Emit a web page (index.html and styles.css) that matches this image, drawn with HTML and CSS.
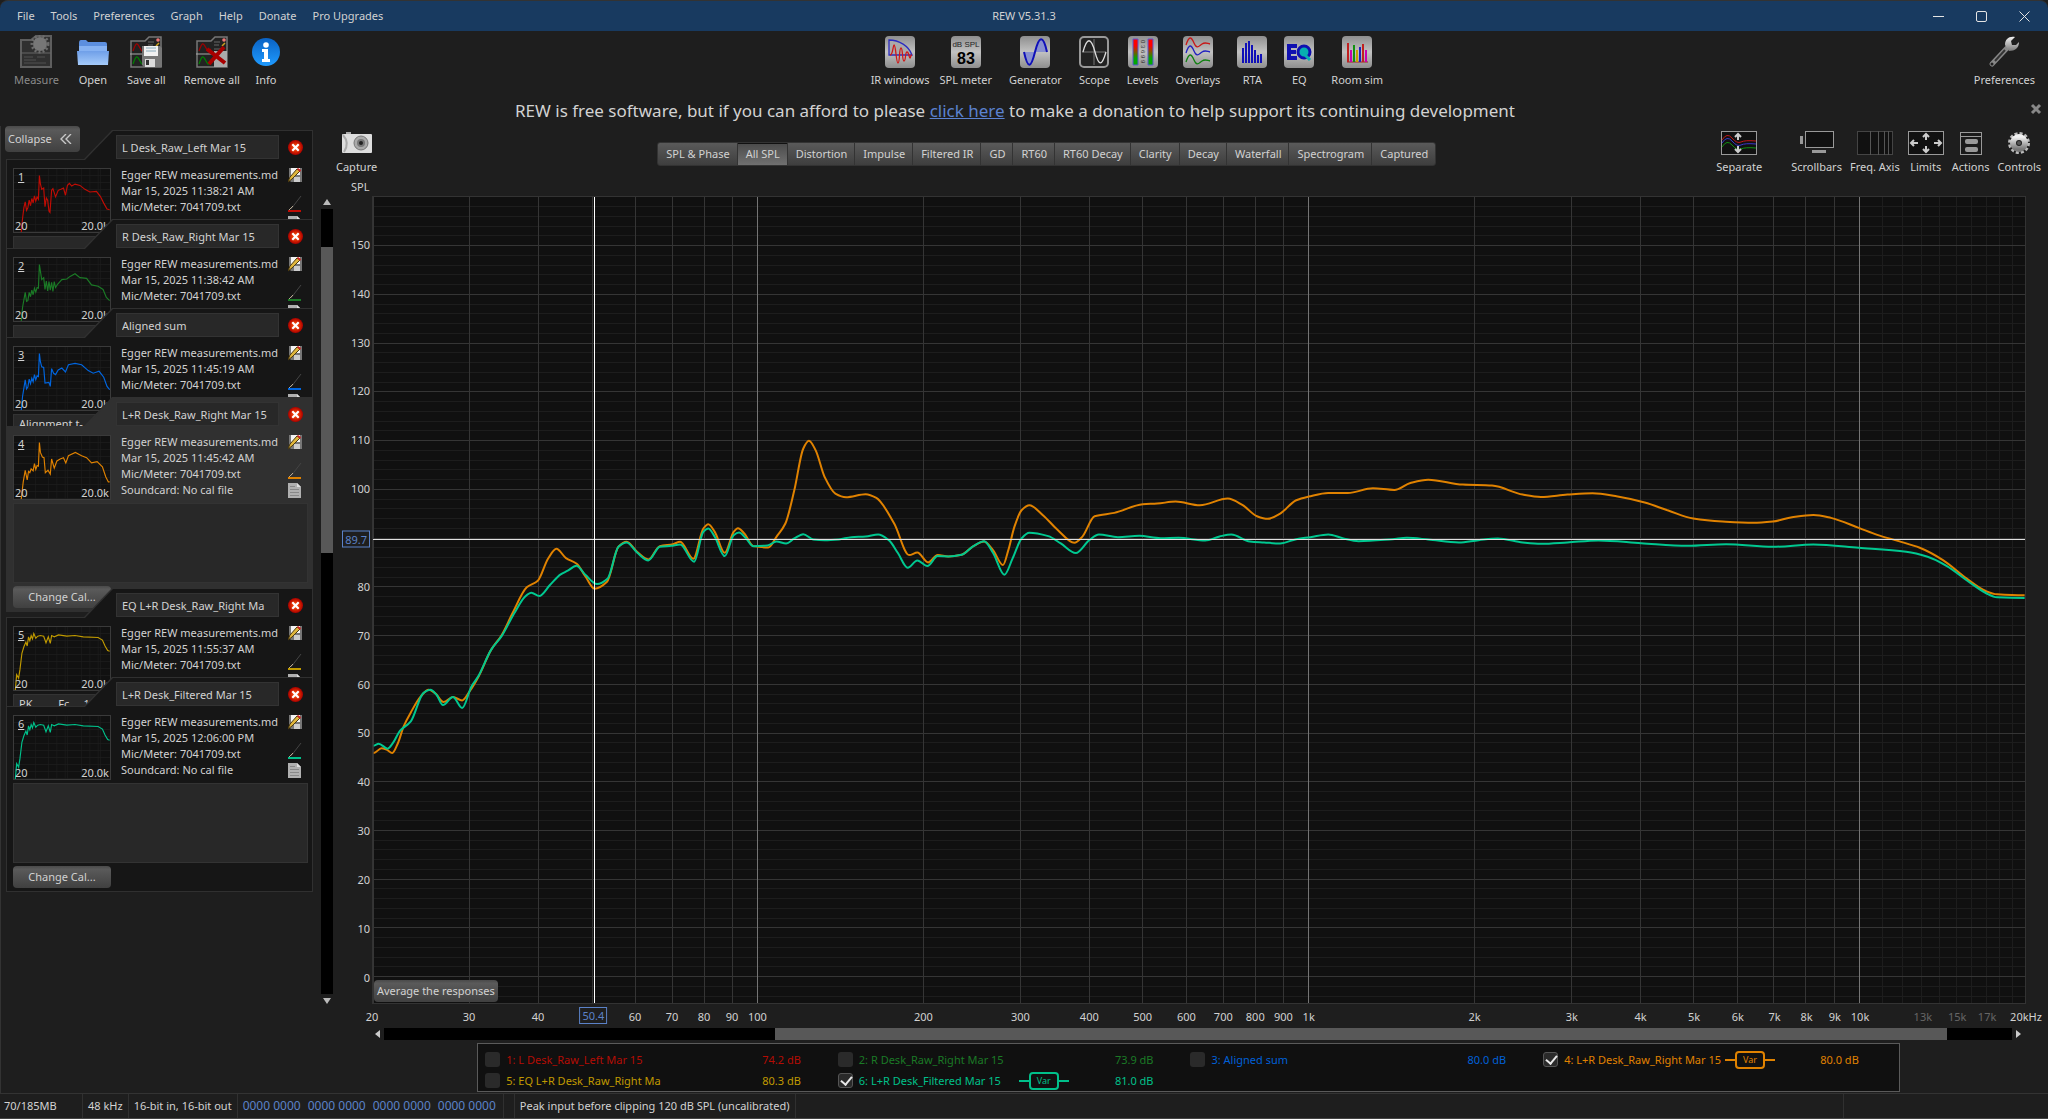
FILE: index.html
```html
<!DOCTYPE html>
<html lang="en">
<head>
    <meta charset="UTF-8">
    <meta name="viewport" content="width=device-width, initial-scale=1.0">
    <title>REW V5.31.3</title>
    <link rel="stylesheet" href="styles.css">
</head>
<body>
    <!-- Shared gradients and small icons -->
    <svg class="defs" aria-hidden="true">
        <defs>
            <linearGradient id="plate" x1="0" y1="0" x2="0" y2="1">
                <stop offset="0" stop-color="#8e8e8e"/><stop offset="0.5" stop-color="#c2c2c2"/><stop offset="1" stop-color="#8e8e8e"/>
            </linearGradient>
            <linearGradient id="level" x1="0" y1="0" x2="0" y2="1">
                <stop offset="0.25" stop-color="#f00"/><stop offset="0.75" stop-color="#00a800"/>
            </linearGradient>
            <linearGradient id="folder" x1="0" y1="0" x2="0" y2="1">
                <stop offset="0" stop-color="#6f9fe8"/><stop offset="1" stop-color="#a5cbfa"/>
            </linearGradient>
            <linearGradient id="blue" x1="0" y1="0" x2="0" y2="1">
                <stop offset="0" stop-color="#0a62c4"/><stop offset="1" stop-color="#1f9bff"/>
            </linearGradient>
            <linearGradient id="steel" x1="0" y1="0" x2="0" y2="1">
                <stop offset="0" stop-color="#f2f2f2"/><stop offset="1" stop-color="#777"/>
            </linearGradient>
            <radialGradient id="red">
                <stop offset="0" stop-color="#ff6a20"/><stop offset="0.6" stop-color="#d82400"/><stop offset="1" stop-color="#a80000"/>
            </radialGradient>
        </defs>
        <symbol id="i-delete" viewBox="0 0 14 14">
            <circle cx="7" cy="7" r="7" fill="url(#red)"/>
            <path d="M4 4l6 6M10 4l-6 6" stroke="#fff" stroke-width="2"/>
        </symbol>
        <symbol id="i-edit" viewBox="0 0 15 15">
            <path d="M1 0h13v14H3l-2-2z" fill="#777"/>
            <path d="M3 0h9v7H3z" fill="#f4f4f4"/>
            <path d="M6 9h6v5H6z" fill="#ccc"/>
            <path d="M0 14L2 9 9 1l3 2-8 8z" fill="#e0b63c" stroke="#4b3a10"/>
            <path d="M9 1l1-1 3 2-1 2z" fill="#d02020"/>
        </symbol>
        <symbol id="i-doc" viewBox="0 0 13 15">
            <path d="M0 0h9l4 4v11H0z" fill="#b0b0b0"/>
            <path d="M9 0v4h4" fill="#e0e0e0"/>
            <path d="M2 3.5h5M2 6.5h9M2 9.5h9M2 12.5h9" stroke="#888"/>
        </symbol>
        <symbol id="i-sheet" viewBox="0 0 32 32">
            <path d="M1 5h14l4-4h12v30H1z" fill="#222" stroke="#777" stroke-width="1.5"/>
            <path d="M0 18h31" stroke="#aaa"/>
            <path d="M3 15c3-9 4-9 7-3s3 2 5 1" fill="none" stroke="#a00000" stroke-width="1.2"/>
            <path d="M3 28c3-9 4-9 7-3s3 2 5 1" fill="none" stroke="#008000" stroke-width="1.2"/>
            <circle cx="28" cy="4" r="1.8" fill="#e77"/>
            <path d="M26 10l3-3M26 23l3-3" stroke="#c9a020" stroke-width="1.5"/>
            <path d="M18 6h6M18 9h5M18 13h7" stroke="#666"/>
        </symbol>
    </svg>

    <!-- Title bar -->
    <header class="titlebar">
        <nav class="menu">
            <button>File</button><button>Tools</button><button>Preferences</button><button>Graph</button><button>Help</button><button>Donate</button><button>Pro Upgrades</button>
        </nav>
        <h1>REW V5.31.3</h1>
        <div class="window-buttons">
            <button aria-label="Minimize"><svg width="11" height="11" viewBox="0 0 11 11"><path d="M0 5.5h11"/></svg></button>
            <button aria-label="Maximize"><svg width="11" height="11" viewBox="0 0 11 11"><rect x=".5" y=".5" width="10" height="10" rx="1.5"/></svg></button>
            <button aria-label="Close"><svg width="11" height="11" viewBox="0 0 11 11"><path d="M.5.5l10 10M10.5.5l-10 10"/></svg></button>
        </div>
    </header>

    <!-- Main toolbar -->
    <div class="toolbar">
        <div class="tools left">
            <button class="tool" disabled>
                <svg width="32" height="34" viewBox="0 0 32 34"><path d="M1 5h10l5-4h15v31H1z" fill="#303030" stroke="#5e5e5e" stroke-width="2"/><path d="M1 18h30" stroke="#666"/><circle cx="20" cy="9" r="7" fill="#777"/><circle cx="20" cy="9" r="8" fill="none" stroke="#6c6c6c" stroke-width="3" stroke-dasharray="2 2"/><path d="M4 22h9M4 25h12M4 28h22M17 22h8" stroke="#505050"/></svg>
                <span>Measure</span>
            </button>
            <button class="tool">
                <svg width="32" height="34" viewBox="0 0 32 34"><path d="M2 8q0-3 2-3h5l2 2h17q2 0 2 2v10H2z" fill="#5c8fdf"/><path d="M2 11h28v5H2z" fill="#86b2f2"/><path d="M0 16h32l-1 14H1z" fill="url(#folder)"/></svg>
                <span>Open</span>
            </button>
            <button class="tool">
                <svg width="32" height="34" viewBox="0 0 32 34"><use href="#i-sheet" width="32" height="32" y="1"/><path d="M12 11h18l2 2v19H14l-2-2z" fill="#777"/><path d="M14 11h14v10H14z" fill="#f1f1f1"/><path d="M16 13h10M16 16h10" stroke="#8ab"/><path d="M15 24h10v8H15z" fill="#ddd"/><path d="M16 25h3v5h-3z" fill="#333"/></svg>
                <span>Save all</span>
            </button>
            <button class="tool">
                <svg width="32" height="34" viewBox="0 0 32 34"><use href="#i-sheet" width="32" height="32" y="1"/><path d="M18 16h13v16H18z" fill="#aaa"/><path d="M11 14l18 14M28 12L13 29" stroke="#a80000" stroke-width="4"/></svg>
                <span>Remove all</span>
            </button>
            <button class="tool info">
                <svg width="28" height="34" viewBox="0 0 28 34"><circle cx="14" cy="17" r="14" fill="url(#blue)"/><circle cx="14" cy="10" r="2.8" fill="#fff"/><path d="M10 14h6v10h2v3h-8v-3h2v-7h-2z" fill="#fff"/></svg>
                <span>Info</span>
            </button>
        </div>
        <div class="tools middle">
            <button class="tool">
                <svg width="30" height="34" viewBox="0 0 30 34"><rect y="1" width="30" height="32" rx="4" fill="url(#plate)"/><path d="M4 20V5c10 0 20 6 23 15z" fill="#aaa" stroke="#2c2cc0" stroke-width="1.3"/><path d="M5 20c3 0 3-10 4-10 2 0 2 18 4 18s1-15 3-15 1 13 3 13 1-9 3-9 2 6 3 6 0-3 2-3" fill="none" stroke="#d01818" stroke-width="1.3"/></svg>
                <span>IR windows</span>
            </button>
            <button class="tool">
                <svg width="30" height="34" viewBox="0 0 30 34"><rect y="1" width="30" height="32" rx="4" fill="url(#plate)"/><text x="15" y="12" class="icon-text" font-size="8">dB SPL</text><text x="15" y="29" class="icon-text bold" font-size="16">83</text></svg>
                <span>SPL meter</span>
            </button>
            <button class="tool wide">
                <svg width="30" height="34" viewBox="0 0 30 34"><rect y="1" width="30" height="32" rx="4" fill="url(#plate)"/><path d="M4 17C8 35 11 33 15 17z M15 17C19-1 23-1 27 17z" fill="#8890d0"/><path d="M4 17C8 35 11 33 15 17S23-1 27 17" fill="none" stroke="#1010b8" stroke-width="2"/></svg>
                <span>Generator</span>
            </button>
            <button class="tool wide">
                <svg width="30" height="34" viewBox="0 0 30 34"><rect x="1" y="2" width="28" height="30" rx="4" fill="#222" stroke="#999" stroke-width="2"/><path d="M15 4v26M3 17h24" stroke="#777"/><path d="M4 17c4-15 8-15 12 0s7 14 11 0" fill="none" stroke="#ddd" stroke-width="1.3"/></svg>
                <span>Scope</span>
            </button>
            <button class="tool wide">
                <svg width="30" height="34" viewBox="0 0 30 34"><rect y="1" width="30" height="32" rx="4" fill="url(#plate)"/><path d="M5 4h5v26H5zM20 4h5v26h-5z" fill="url(#level)" stroke="#5858d0"/><text transform="rotate(90 13 5)" x="13" y="5" font-size="6" font-family="Liberation Sans" fill="#333">0 3 6 9 9</text></svg>
                <span>Levels</span>
            </button>
            <button class="tool wide">
                <svg width="30" height="34" viewBox="0 0 30 34"><rect y="1" width="30" height="32" rx="4" fill="url(#plate)"/><path d="M3 10c3-9 5-9 8-2s5 3 8 1 4-1 8 0" fill="none" stroke="#c81818" stroke-width="1.3"/><path d="M3 18c3-9 5-9 8-2s5 3 8 1 4-1 8 0" fill="none" stroke="#2020c0" stroke-width="1.3"/><path d="M3 27c3-9 5-9 8-2s5 3 8 1 4-1 8 0" fill="none" stroke="#108010" stroke-width="1.3"/></svg>
                <span>Overlays</span>
            </button>
            <button class="tool wide">
                <svg width="30" height="34" viewBox="0 0 30 34"><rect y="1" width="30" height="32" rx="4" fill="url(#plate)"/><path d="M6 28V13M9 28V8M12 28V6M15 28V10M18 28V15M21 28V20M24 28V19" stroke="#1010b8" stroke-width="2"/></svg>
                <span>RTA</span>
            </button>
            <button class="tool wide">
                <svg width="30" height="34" viewBox="0 0 30 34"><rect y="1" width="30" height="32" rx="4" fill="url(#plate)"/><path d="M3 9h10v4H7v2h5v4H7v2h6v4H3z" fill="#1010b0"/><circle cx="20" cy="17" r="6" fill="#08b0b0" stroke="#1010b0" stroke-width="3"/><path d="M21 20l5 5" stroke="#08b0b0" stroke-width="3"/></svg>
                <span>EQ</span>
            </button>
            <button class="tool wide">
                <svg width="30" height="34" viewBox="0 0 30 34"><rect y="1" width="30" height="32" rx="4" fill="url(#plate)"/><path d="M5 27h21" stroke="#a02020"/><path d="M6 27V8" stroke="#c02020" stroke-width="2"/><path d="M9 27V15M24 27V15" stroke="#c800b0" stroke-width="2"/><path d="M12 27V10" stroke="#109010" stroke-width="2"/><path d="M15 27V15" stroke="#c8a000" stroke-width="2"/><path d="M18 27V12" stroke="#2020c0" stroke-width="2"/><path d="M21 27V9" stroke="#c02020" stroke-width="2"/></svg>
                <span>Room sim</span>
            </button>
        </div>
        <div class="tools right">
            <button class="tool">
                <svg width="32" height="34" viewBox="0 0 32 34"><path d="M4 29L20 12" stroke="#888" stroke-width="5" stroke-linecap="round"/><path d="M7 26L17 15" stroke="#333" stroke-width="2"/><circle cx="4" cy="29" r="1.5" fill="#222"/><path d="M17 10C17 4 21 1 27 2l-4 4 1 4 4 0 3-3c0 6-4 9-10 9z" fill="url(#steel)"/></svg>
                <span>Preferences</span>
            </button>
        </div>
    </div>

    <!-- Donation message -->
    <div class="donate">
        <p>REW is free software, but if you can afford to please <a href="#">click here</a> to make a donation to help support its continuing development</p>
        <button aria-label="Dismiss"><svg width="12" height="12" viewBox="0 0 12 12"><path d="M2 2l8 8M10 2l-8 8" stroke="#888" stroke-width="3"/></svg></button>
    </div>

    <div class="workspace">
        <!-- Measurements -->
        <aside class="sidebar">
            <button class="collapse raised">Collapse <svg width="12" height="10" viewBox="0 0 12 10"><path d="M6 0L1 5l5 5M11 0L6 5l5 5" fill="none" stroke="#c8c8c8" stroke-width="1.4"/></svg></button>
            <div class="cards" id="cards"></div>
            <div class="vscroll">
                <svg width="8" height="6" viewBox="0 0 8 6"><path d="M4 0l4 6H0z" fill="#bbb"/></svg>
                <div class="track"><div class="thumb"></div></div>
                <svg width="8" height="6" viewBox="0 0 8 6"><path d="M4 6l4-6H0z" fill="#bbb"/></svg>
            </div>
        </aside>

        <main class="graph">
            <div class="graph-bar">
                <button class="tool">
                    <svg width="30" height="24" viewBox="0 0 30 24"><path d="M4 1h5v3H4z" fill="#aaa"/><rect y="3" width="30" height="19" rx="1" fill="#dedede"/><path d="M1 4q7 8 1 17" fill="none" stroke="#aaa" stroke-width="2"/><circle cx="19" cy="12" r="7" fill="#aaa" stroke="#777"/><circle cx="19" cy="12" r="4" fill="#777"/><circle cx="19" cy="12" r="2" fill="#222"/></svg>
                    <span>Capture</span>
                </button>
                <div class="tabs">
                    <button>SPL &amp; Phase</button><button class="selected">All SPL</button><button>Distortion</button><button>Impulse</button><button>Filtered IR</button><button>GD</button><button>RT60</button><button>RT60 Decay</button><button>Clarity</button><button>Decay</button><button>Waterfall</button><button>Spectrogram</button><button>Captured</button>
                </div>
                <div class="graph-tools">
                    <button class="tool separate">
                        <svg width="36" height="24" viewBox="0 0 36 24"><rect x=".5" y=".5" width="35" height="23" fill="#111" stroke="#999"/><path d="M1 9q5-8 10-2t9 4 15-1" fill="none" stroke="#c01818"/><path d="M1 12q5-8 10-2t9 4 15-1" fill="none" stroke="#3838c8"/><path d="M1 16q5-8 10-2t9 4 15-1" fill="none" stroke="#109010"/><path d="M17 9V3M14 6l3-3 3 3M17 15v6M14 18l3 3 3-3" fill="none" stroke="#ccc" stroke-width="2"/></svg>
                        <span>Separate</span>
                    </button>
                    <button class="tool">
                        <svg width="36" height="24" viewBox="0 0 36 24"><rect x="6.5" y=".5" width="28" height="16" fill="#111" stroke="#999"/><path d="M1 5h3v8H1zM13 19h14v3H13z" fill="#999"/></svg>
                        <span>Scrollbars</span>
                    </button>
                    <button class="tool">
                        <svg width="36" height="24" viewBox="0 0 36 24"><rect x=".5" y=".5" width="35" height="23" fill="#111" stroke="#444"/><path d="M13.5 0v24M21.5 0v24M27.5 0v24M31.5 0v24" stroke="#555"/></svg>
                        <span>Freq. Axis</span>
                    </button>
                    <button class="tool">
                        <svg width="36" height="24" viewBox="0 0 36 24"><rect x=".5" y=".5" width="35" height="23" fill="#111" stroke="#999"/><path d="M18 9V3M15 6l3-3 3 3M18 15v6M15 18l3 3 3-3M10 12H3M6 9l-3 3 3 3M26 12h7M30 9l3 3-3 3" fill="none" stroke="#ccc" stroke-width="2"/></svg>
                        <span>Limits</span>
                    </button>
                    <button class="tool">
                        <svg width="24" height="24" viewBox="0 0 24 24"><rect x="1.5" y="1.5" width="21" height="22" fill="#1a1a1a" stroke="#999"/><path d="M1 5.5h22" stroke="#999"/><rect x="6" y="8" width="13" height="5" rx="2" fill="#999"/><rect x="6" y="16" width="13" height="5" rx="2" fill="#999"/></svg>
                        <span>Actions</span>
                    </button>
                    <button class="tool">
                        <svg width="24" height="24" viewBox="0 0 24 24"><circle cx="12" cy="12" r="9.5" fill="none" stroke="#bbb" stroke-width="3" stroke-dasharray="3 2"/><circle cx="12" cy="12" r="6" fill="none" stroke="url(#steel)" stroke-width="6"/><circle cx="12" cy="12" r="2" fill="#555"/></svg>
                        <span>Controls</span>
                    </button>
                </div>
            </div>

            <div class="axis-title">SPL</div>
            <div class="plot-row">
                <div class="y-axis" id="yAxis"></div>
                <div class="plot">
                    <svg id="plot" viewBox="0 0 4631 2424" preserveAspectRatio="none"></svg>
                    <button class="average raised">Average the responses</button>
                </div>
            </div>
            <div class="x-axis" id="xAxis"></div>
            <div class="hscroll">
                <svg width="5" height="8" viewBox="0 0 5 8"><path d="M0 4l5-4v8z" fill="#ccc"/></svg>
                <div class="track"><div class="thumb"></div></div>
                <svg width="5" height="8" viewBox="0 0 5 8"><path d="M5 4L0 0v8z" fill="#ccc"/></svg>
            </div>

            <!-- Legend -->
            <div class="legend">
                <label class="c1"><input type="checkbox"><span>1: L Desk_Raw_Left Mar 15</span><output>74.2 dB</output></label>
                <label class="c2"><input type="checkbox"><span>2: R Desk_Raw_Right Mar 15</span><output>73.9 dB</output></label>
                <label class="c3"><input type="checkbox"><span>3: Aligned sum</span><output>80.0 dB</output></label>
                <label class="c4"><input type="checkbox" checked><span>4: L+R Desk_Raw_Right Mar 15</span><i><b>Var</b></i><output>80.0 dB</output></label>
                <label class="c5"><input type="checkbox"><span>5: EQ L+R Desk_Raw_Right Ma</span><output>80.3 dB</output></label>
                <label class="c6"><input type="checkbox" checked><span>6: L+R Desk_Filtered Mar 15</span><i><b>Var</b></i><output>81.0 dB</output></label>
            </div>
        </main>
    </div>

    <footer class="status">
        <span class="memory">70/185MB</span>
        <span>48 kHz</span>
        <span>16-bit in, 16-bit out</span>
        <span class="bits"><b>0000 0000</b><b>0000 0000</b><b>0000 0000</b><b>0000 0000</b></span>
        <span class="spacer"></span>
        <span>Peak input before clipping 120 dB SPL (uncalibrated)</span>
        <span class="rest"></span>
    </footer>

    <script src="script.js"></script>
</body>
</html>
```
FILE: styles.css
```css
* {
    box-sizing: border-box;
}
body {
    margin: 0;
    height: 100vh;
    display: flex;
    flex-direction: column;
    overflow: hidden;
    background-color: #1e1e1e;
    color: #d2d2d2;
    font-family: "Noto Sans", sans-serif;
    font-size: 11px;
    line-height: 16px;
}
button, input, textarea {
    font: inherit;
    color: inherit;
    background: none;
    border: none;
    padding: 0;
    margin: 0;
}
button {
    white-space: nowrap;
}
.defs {
    position: absolute;
    width: 0;
    height: 0;
}
.raised {
    background: linear-gradient(#4a4a4a, #5a5a5a 15%, #404040);
    border-radius: 4px;
}

/* Title bar */
.titlebar {
    flex: none;
    display: grid;
    grid-template-columns: 1fr auto 1fr;
    align-items: center;
    height: 31px;
    border-top: 1px solid #333;
    border-radius: 8px 8px 0 0;
    background-color: #183a60;
}
.titlebar h1 {
    margin: 0;
    font-size: 11px;
    font-weight: normal;
}
.menu {
    display: flex;
    gap: 16px;
    padding-left: 17px;
}
.window-buttons {
    display: flex;
    justify-content: flex-end;
    gap: 32px;
    padding-right: 18px;
}
.window-buttons svg {
    display: block;
    fill: none;
    stroke: #e4e4e4;
}

/* Toolbars */
.toolbar {
    flex: none;
    display: flex;
    justify-content: space-between;
    padding: 4px 13px 7px 14px;
}
.tools {
    display: flex;
    gap: 18px;
}
.tools.middle {
    gap: 10px;
}
.tool {
    display: flex;
    flex-direction: column;
    align-items: center;
    gap: 3px;
}
.tool.wide {
    margin-left: 7px;
}
.tool.info {
    margin-left: -6px;
}
.tool:disabled {
    color: #8a8a8a;
}
.icon-text {
    font-family: "Liberation Sans", sans-serif;
    text-anchor: middle;
    fill: #222;
}
.icon-text.bold {
    font-weight: bold;
    fill: #000;
}
.donate {
    flex: none;
    display: flex;
    align-items: center;
    height: 31px;
    padding-right: 6px;
}
.donate p {
    flex: 1;
    margin: 0;
    text-align: center;
    font-size: 17px;
    line-height: 24px;
}
.donate a {
    color: #5b82d0;
}
.workspace {
    flex: 1;
    display: flex;
    min-height: 0;
}

/* Measurement list */
.sidebar {
    position: relative;
    flex: none;
    display: flex;
    gap: 7px;
    width: 334px;
    padding: 4px 1px 89px 5px;
    border-left: 1px solid #333;
}
.collapse {
    position: absolute;
    top: 0;
    left: 4px;
    z-index: 1;
    display: flex;
    align-items: center;
    gap: 8px;
    height: 26px;
    padding: 0 8px 0 3px;
}
.cards {
    flex: 1;
}
.card {
    position: relative;
    padding: 5px 5px 4px 7px;
    background-color: #303030;
    clip-path: polygon(0 29px, 78px 29px, 106px 0, 100% 0, 100% 100%, 0 100%);
}
.card::before {
    content: "";
    position: absolute;
    inset: 1px;
    background-color: #161616;
    clip-path: polygon(0 29px, 78px 29px, 106px 0, 100% 0, 100% 100%, 0 100%);
}
.card.selected::before {
    background-color: #303030;
}
.card > * {
    position: relative;
}
.card.covered {
    margin-bottom: -126px;
}
.card.covered.selected {
    margin-bottom: -24px;
}
.card-head {
    display: flex;
    align-items: center;
    justify-content: space-between;
    padding: 0 5px 0 103px;
}
.card-head input {
    width: 163px;
    height: 24px;
    padding: 0 5px;
    border: 1px solid #333;
    background-color: #282828;
}
.card-head svg, .card-icons svg {
    display: block;
}
.card-body {
    display: grid;
    grid-template-columns: 98px 1fr 16px;
    gap: 10px;
    padding: 8px 4px 0 0;
}
.thumb-plot {
    position: relative;
    width: 98px;
    height: 65px;
    margin-top: 1px;
    border: 1px solid #3a3a3a;
    background: repeating-linear-gradient(#111 0 6px, #1a1a1a 6px 7px);
}
.thumb-plot svg {
    display: block;
    width: 96px;
    height: 63px;
}
.thumb-plot b, .thumb-plot span {
    position: absolute;
    bottom: -1px;
    line-height: 14px;
}
.thumb-plot b {
    top: 1px;
    bottom: auto;
    left: 4px;
    font-weight: normal;
    text-decoration: underline;
}
.thumb-plot .low {
    left: 1px;
}
.thumb-plot .high {
    right: 1px;
}
.card-info {
    margin: 0;
    white-space: nowrap;
    overflow: hidden;
}
.card-icons {
    display: grid;
    grid-auto-rows: 16px;
    align-items: center;
}
.card-icons .stroke {
    align-self: end;
    grid-row: 2 / 4;
}
.card-icons .doc {
    grid-row: 4;
}
.card textarea {
    display: block;
    width: 100%;
    height: 80px;
    margin: 3px 0;
    padding: 1px 5px;
    resize: none;
    border: 1px solid #333;
    background-color: #282828;
    white-space: pre;
    overflow: hidden;
}
.change {
    display: block;
    width: 98px;
    height: 22px;
}

/* Scrollbars */
.vscroll {
    display: flex;
    flex-direction: column;
    align-items: center;
    gap: 4px;
    width: 13px;
    padding-top: 69px;
}
.track {
    flex: 1;
    background-color: #000;
}
.vscroll .track {
    width: 12px;
    padding-top: 38px;
}
.thumb {
    background-color: #585858;
}
.vscroll .thumb {
    height: 41%;
}
.hscroll {
    display: flex;
    align-items: center;
    gap: 4px;
    margin: 2px 27px 0 41px;
}
.hscroll .track {
    height: 12px;
}
.hscroll .thumb {
    width: 72%;
    height: 12px;
    margin-left: 24%;
}

/* Graph */
.graph {
    flex: 1;
    min-width: 0;
    display: flex;
    flex-direction: column;
}
.graph-bar {
    display: flex;
    justify-content: space-between;
    align-items: flex-start;
    padding: 5px 7px 0 2px;
}
.graph-bar .tool {
    gap: 4px;
}
.graph-tools {
    display: flex;
    gap: 8px;
}
.separate {
    margin-right: 21px;
}
.tabs {
    display: flex;
    margin-top: 11px;
    border: 1px solid #333;
    border-radius: 3px;
    background: linear-gradient(#5a5a5a, #3e3e3e);
}
.tabs button {
    height: 22px;
    padding: 0 7px 0 8px;
    border-right: 1px solid #333;
}
.tabs button:last-child {
    border: none;
}
.tabs .selected {
    background: linear-gradient(#4a4a4a, #707070);
    box-shadow: inset 0 1px #111;
}
.axis-title {
    margin: 3px 0 0 17px;
    line-height: 18px;
}
.plot-row {
    flex: 1;
    min-height: 0;
    display: grid;
    grid-template-columns: 38px 1fr;
    padding-right: 22px;
}
.plot {
    position: relative;
    border: 1px solid #333;
    background-color: #101010;
}
.plot svg {
    position: absolute;
    width: 100%;
    height: 100%;
}
.plot path {
    fill: none;
    vector-effect: non-scaling-stroke;
    shape-rendering: crispEdges;
}
.minor { stroke: #1d1d1d; }
.major { stroke: #353535; }
.decade { stroke: #747474; }
.cursor { stroke: #fff; }
.level { stroke: #e0e0e0; }
.plot .trace {
    stroke-width: 2px;
    shape-rendering: auto;
}
.average {
    position: absolute;
    left: 1px;
    bottom: 1px;
    height: 22px;
    padding: 0 3px;
}
.y-axis, .x-axis {
    position: relative;
}
.x-axis {
    height: 22px;
    margin: 0 22px 0 38px;
}
.y-axis span {
    position: absolute;
    right: 2px;
    transform: translateY(-50%);
}
.x-axis span {
    position: absolute;
    top: 5px;
    transform: translateX(-50%);
}
.axis-mark {
    padding: 0 2px;
    line-height: 15px;
    border: 1px solid #5b82c8;
    background-color: #1e1e1e;
    color: #5b82c8;
}
.x-axis .axis-mark {
    top: 3px;
}
.dim {
    color: #666;
}

/* Legend */
.legend {
    display: grid;
    grid-template-columns: repeat(4, 1fr);
    width: 83%;
    align-self: center;
    margin: 3px 5px 1px 0;
    padding: 5px 3px 0 7px;
    border: 1px solid #5a5a5a;
    background-color: #101010;
}
.legend label {
    display: flex;
    align-items: center;
    height: 21px;
    padding-right: 37px;
    white-space: nowrap;
}
.legend input {
    appearance: none;
    width: 15px;
    height: 15px;
    margin-right: 6px;
    border-radius: 3px;
    background-color: #2a2a2a;
}
.legend input:checked {
    border: 1px solid #555;
}
.legend input:checked::after {
    content: "";
    display: block;
    width: 5px;
    height: 9px;
    margin-left: 4px;
    border: solid #e8e8e8;
    border-width: 0 2px 2px 0;
    rotate: 40deg;
}
.legend output {
    margin-left: auto;
}
.legend i {
    width: 50px;
    margin-left: 4px;
    padding: 0 10px;
    font-style: normal;
    background: linear-gradient(currentColor, currentColor) center / 100% 2px no-repeat;
}
.legend b {
    display: block;
    border: 2px solid currentColor;
    border-radius: 4px;
    background-color: #101010;
    text-align: center;
    font-size: 9px;
    font-weight: normal;
    line-height: 14px;
}
.legend .c6 i {
    margin-left: 18px;
}
.c1 { color: #b40c04; }
.c2 { color: #1b7a26; }
.c3 { color: #0060d8; }
.c4 { color: #e08200; }
.c5 { color: #c09a00; }
.c6 { color: #00c08a; }

/* Status bar */
.status {
    flex: none;
    display: flex;
    height: 26px;
    border-top: 1px solid #333;
    border-bottom: 1px solid #444;
    white-space: nowrap;
}
.status span {
    padding: 4px 5px 0;
    border-right: 1px solid #303030;
}
.status .memory {
    width: 83px;
    padding-left: 4px;
}
.status .bits {
    display: flex;
    gap: 7px;
    padding-right: 7px;
    color: #5b82c8;
    font-size: 12px;
}
.bits b {
    font-weight: normal;
}
.status .rest {
    width: 1048px;
}
```
FILE: script.js
```js
const cards = [
    { name: 'L Desk_Raw_Left Mar 15', time: 'Mar 15, 2025 11:38:21 AM', color: '#c00c04', notes: '',
      line: '22,192 26,150 30,118 34,100 38,126 42,118 46,95 50,112 54,90 58,103 62,82 66,98 70,85 74,92 77,20 80,45 84,62 90,58 94,115 98,88 102,95 106,128 109,132 114,65 118,60 126,85 134,65 142,62 150,58 156,80 162,50 168,44 175,52 185,46 200,50 215,62 230,70 250,68 262,84 272,104 282,122 290,124' },
    { name: 'R Desk_Raw_Right Mar 15', time: 'Mar 15, 2025 11:38:42 AM', color: '#1b7a26', notes: '',
      line: '22,192 26,150 34,105 38,132 42,130 46,105 50,118 54,98 58,112 62,92 66,104 70,90 74,92 77,20 80,40 84,66 90,60 94,96 98,70 102,100 106,72 110,98 114,74 118,102 122,72 126,90 132,80 145,66 160,64 170,56 185,48 200,60 220,62 235,82 255,86 270,96 280,120 290,130' },
    { name: 'Aligned sum', time: 'Mar 15, 2025 11:45:19 AM', color: '#0066e0', notes: 'Alignment t-',
      line: '22,192 26,150 34,100 38,128 42,122 46,98 50,112 54,95 58,106 62,84 66,100 70,88 74,90 77,20 80,45 84,60 90,62 94,110 106,108 110,120 114,66 120,80 126,84 134,70 145,64 156,76 165,54 185,50 205,54 225,72 240,80 258,74 272,92 282,120 290,130' },
    { name: 'L+R Desk_Raw_Right Mar 15', time: 'Mar 15, 2025 11:45:42 AM', color: '#e08200', notes: '', selected: true,
      line: '22,192 28,140 34,105 40,134 44,108 48,112 52,100 58,106 62,84 66,102 70,90 74,92 77,20 80,50 86,64 91,66 95,112 103,104 110,116 114,70 122,98 130,76 140,70 150,66 157,82 165,60 186,50 205,60 220,66 235,82 252,78 268,94 278,124 286,140 290,140' },
    { name: 'EQ L+R Desk_Raw_Right Ma', time: 'Mar 15, 2025 11:55:37 AM', color: '#c09a00', notes: 'PK         Fc     10',
      line: '4,192 8,145 14,156 18,130 24,80 30,60 36,46 40,58 44,30 48,42 52,26 56,36 60,20 66,34 72,28 80,26 90,28 97,48 104,30 110,50 114,26 122,30 135,24 160,28 185,26 210,30 255,32 268,40 276,58 284,72 290,74' },
    { name: 'L+R Desk_Filtered Mar 15', time: 'Mar 15, 2025 12:06:00 PM', color: '#00c08a', notes: '',
      line: '4,192 8,145 14,156 18,130 24,80 30,60 36,46 40,58 44,30 48,42 52,26 56,36 60,20 66,34 72,28 80,26 90,28 97,48 104,30 110,50 114,26 122,30 135,24 160,28 185,26 210,30 255,32 268,40 276,58 284,72 290,74' }
];

document.getElementById('cards').innerHTML = cards.map((c, i) => {
    const covered = i < cards.length - 1 ? 'covered' : '';
    return `
    <section class="card ${covered} ${c.selected ? 'selected' : ''}">
        <div class="card-head">
            <input type="text" aria-label="Measurement name" value="${c.name}">
            <button aria-label="Delete"><svg width="15" height="15"><use href="#i-delete"/></svg></button>
        </div>
        <div class="card-body">
            <div class="thumb-plot">
                <svg viewBox="0 0 291 192" preserveAspectRatio="none">
                    <path d="M65 0v192M105 0v192M130 0v192M155 0v192M162 0v192M205 0v192M230 0v192M255 0v192M262 0v192" stroke="#1f1f1f" stroke-width="2"/>
                    <polyline points="${c.line}" fill="none" stroke="${c.color}" stroke-width="3.5"/>
                </svg>
                <b>${i + 1}</b><span class="low">20</span><span class="high">20.0k</span>
            </div>
            <p class="card-info">Egger REW measurements.md<br>${c.time}<br>Mic/Meter: 7041709.txt<br>Soundcard: No cal file</p>
            <div class="card-icons">
                <svg width="15" height="15"><use href="#i-edit"/></svg>
                <svg class="stroke" width="14" height="20" viewBox="0 0 14 20"><path d="M3 14L13 1" stroke="#444"/><path d="M1 15l4-4" stroke="#b8a890"/><path d="M0 16h13" stroke="${c.color}" stroke-width="2"/></svg>
                <svg class="doc" width="13" height="15"><use href="#i-doc"/></svg>
            </div>
        </div>
        <textarea aria-label="Notes">${c.notes}</textarea>
        <button class="change raised">Change Cal...</button>
    </section>`;
}).join('');

// Plot size in drawing units, 160 dB at the top edge
const W = 4631, H = 2424;
const DB = 14.655;
const xOf = f => Math.log10(f / 20) / 3 * W;
const yOf = db => (160 - db) * DB;

const orange = [2,1672, 24,1658, 38,1662, 54,1672, 70,1642, 86,1592, 106,1550, 134,1502, 156,1482, 174,1492, 198,1519, 224,1504, 250,1514, 270,1488, 296,1442, 331,1362, 361,1317, 391,1252, 431,1174, 462,1154, 491,1087, 514,1058, 541,1086, 571,1103, 596,1142, 621,1178, 656,1157, 688,1052, 711,1037, 741,1068, 772,1090, 804,1050, 841,1044, 861,1037, 898,1088, 926,997, 940,984, 958,1007, 986,1070, 1011,1007, 1023,996, 1041,1012, 1066,1050, 1108,1054, 1131,1022, 1156,982, 1181,882, 1206,757, 1222,733, 1241,762, 1266,842, 1296,892, 1326,903, 1381,894, 1411,905, 1461,982, 1503,1077, 1526,1069, 1556,1099, 1583,1077, 1613,1081, 1650,1076, 1683,1050, 1713,1036, 1738,1062, 1766,1107, 1781,1062, 1798,992, 1818,942, 1840,927, 1878,957, 1918,1000, 1966,1040, 1988,1022, 2023,960, 2078,950, 2158,924, 2198,922, 2250,916, 2318,927, 2396,907, 2438,927, 2478,960, 2508,968, 2543,952, 2588,912, 2623,901, 2678,890, 2733,890, 2803,876, 2863,881, 2908,860, 2958,850, 3055,865, 3137,868, 3223,895, 3274,902, 3348,895, 3419,891, 3489,901, 3565,919, 3631,943, 3701,967, 3783,976, 3869,980, 3924,976, 3978,963, 4038,956, 4087,965, 4165,995, 4217,1016, 4277,1035, 4336,1055, 4401,1092, 4467,1147, 4521,1185, 4553,1195, 4630,1198];
const green = [2,1650, 16,1644, 41,1659, 56,1642, 76,1605, 106,1577, 141,1492, 161,1482, 178,1497, 196,1528, 224,1504, 250,1537, 276,1472, 296,1440, 331,1362, 361,1320, 396,1252, 426,1202, 444,1190, 466,1200, 496,1167, 526,1135, 546,1124, 570,1109, 596,1137, 628,1164, 658,1147, 688,1052, 711,1039, 741,1070, 772,1093, 804,1052, 836,1049, 861,1045, 900,1097, 926,1007, 940,997, 958,1022, 986,1080, 1011,1017, 1026,1009, 1046,1027, 1066,1050, 1106,1048, 1131,1036, 1158,1042, 1181,1027, 1206,1014, 1234,1030, 1266,1032, 1306,1030, 1341,1023, 1381,1021, 1416,1015, 1446,1032, 1471,1070, 1499,1115, 1526,1093, 1554,1110, 1583,1080, 1613,1081, 1650,1076, 1683,1050, 1713,1035, 1738,1070, 1770,1136, 1793,1087, 1818,1027, 1840,1010, 1893,1020, 1928,1042, 1970,1071, 2008,1032, 2035,1015, 2088,1023, 2148,1019, 2208,1026, 2258,1025, 2333,1033, 2373,1021, 2406,1015, 2458,1036, 2498,1039, 2543,1042, 2588,1029, 2628,1023, 2678,1015, 2718,1026, 2763,1035, 2858,1029, 2898,1025, 2958,1030, 3044,1039, 3099,1032, 3153,1027, 3223,1039, 3274,1043, 3348,1039, 3435,1033, 3555,1041, 3685,1049, 3793,1044, 3924,1052, 4038,1045, 4165,1055, 4298,1067, 4358,1082, 4412,1110, 4477,1160, 4521,1191, 4553,1204, 4630,1206];

// Smooth curve through the points, flat at peaks and dips
function smooth(flat) {
    const p = [];
    for (let i = 0; i < flat.length; i += 2) p.push([flat[i], flat[i + 1]]);
    const slope = p.map((_, i) => {
        if (i === 0 || i === p.length - 1) return 0;
        const a = (p[i][1] - p[i - 1][1]) / (p[i][0] - p[i - 1][0]);
        const b = (p[i + 1][1] - p[i][1]) / (p[i + 1][0] - p[i][0]);
        return a * b <= 0 ? 0 : 2 * a * b / (a + b);
    });
    let d = `M${p[0]}`;
    for (let i = 1; i < p.length; i++) {
        const h = (p[i][0] - p[i - 1][0]) / 3;
        d += `C${p[i - 1][0] + h} ${p[i - 1][1] + slope[i - 1] * h} ${p[i][0] - h} ${p[i][1] - slope[i] * h} ${p[i]}`;
    }
    return d;
}

let svg = '';
const line = (cls, d) => { svg += `<path class="${cls}" d="${d}"/>`; };

for (let db = 158; db > -6; db -= 2) {
    if (db % 10) line('minor', `M0 ${yOf(db)}H${W}`);
}
for (let f = 11000; f < 20000; f += 1000) line('minor', `M${xOf(f)} 0V${H}`);
for (let db = 150; db >= 0; db -= 10) line('major', `M0 ${yOf(db)}H${W}`);
[10, 100, 1000].forEach(decade => {
    for (let n = 2; n < 10; n++) line('major', `M${xOf(n * decade)} 0V${H}`);
    line('decade', `M${xOf(decade * 10)} 0V${H}`);
});
svg += `<path class="trace" stroke="#e08200" d="${smooth(orange)}"/>`;
svg += `<path class="trace" stroke="#00c890" d="${smooth(green)}"/>`;
line('level', `M0 ${yOf(89.7)}H${W}`);
line('cursor', `M${xOf(50.4)} 0V${H}`);
document.getElementById('plot').innerHTML = svg;

// Axis labels
let yLabels = '';
for (let db = 150; db >= 0; db -= 10) {
    if (db !== 90) yLabels += `<span style="top:${yOf(db) / H * 100}%">${db}</span>`;
}
yLabels += `<span class="axis-mark" style="top:${yOf(89.7) / H * 100}%">89.7</span>`;
document.getElementById('yAxis').innerHTML = yLabels;

const ticks = [20, 30, 40, 60, 70, 80, 90, 100, 200, 300, 400, 500, 600, 700, 800, 900, 1000, 2000, 3000, 4000, 5000, 6000, 7000, 8000, 9000, 10000, 13000, 15000, 17000, 20000];
document.getElementById('xAxis').innerHTML = ticks.map(f => {
    const text = f < 1000 ? f : f / 1000 + (f === 20000 ? 'kHz' : 'k');
    const cls = f > 10000 && f < 20000 ? 'dim' : '';
    return `<span class="${cls}" style="left:${xOf(f) / W * 100}%">${text}</span>`;
}).join('') + `<span class="axis-mark" style="left:${xOf(50.4) / W * 100}%">50.4</span>`;
```
